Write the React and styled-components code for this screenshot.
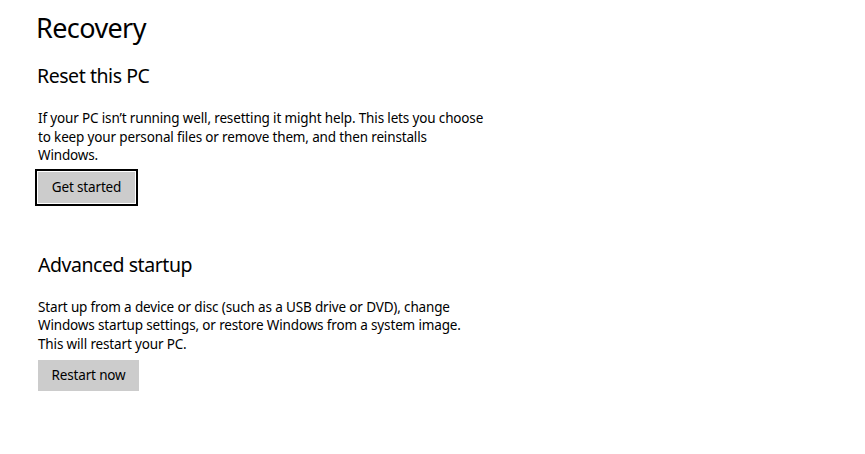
import React from "react";
import styled, { createGlobalStyle } from "styled-components";

const Global = createGlobalStyle`
  html, body { margin: 0; padding: 0; background: #fff; }
  body { font-family: "Noto Sans", "Open Sans", sans-serif; color: #000; }
`;

const Page = styled.main`
  width: 865px;
  height: 454px;
  box-sizing: border-box;
  padding: 10px 0 0 38px;
  display: flex;
  flex-direction: column;
  align-items: flex-start;
`;

const Title = styled.h1`
  margin: 0 0 0 -2px;
  font-size: 27px;
  line-height: 36px;
  font-weight: 400;
  letter-spacing: -0.6px;
`;

const Section = styled.section`
  display: flex;
  flex-direction: column;
  align-items: flex-start;
  margin-top: ${(p) => p.$top}px;
`;

const Heading = styled.h2`
  margin: 0 0 0 ${(p) => p.$shift || 0}px;
  font-size: 19.5px;
  line-height: 28px;
  font-weight: 400;
  letter-spacing: -0.45px;
`;

const Text = styled.p`
  margin: 19px 0 0;
  width: 450px;
  font-size: 13.5px;
  line-height: 18.5px;
  letter-spacing: -0.15px;
`;

const Button = styled.button`
  margin-top: 7px;
  height: 31px;
  min-width: ${(p) => p.$w}px;
  padding: 0 12px;
  border: none;
  background: #cccccc;
  color: #000;
  font-family: inherit;
  font-size: 13.5px;
  line-height: 31px;
  letter-spacing: -0.15px;
  box-shadow: ${(p) =>
    p.$focused ? "0 0 0 1px #fff, 0 0 0 3px #000" : "none"};
  cursor: pointer;
`;

export default function App() {
  return (
    <>
      <Global />
      <Page>
        <Title>Recovery</Title>
        <Section $top={16}>
          <Heading $shift={-1}>Reset this PC</Heading>
          <Text>
            If your PC isn’t running well, resetting it might help. This lets you
            choose to keep your personal files or remove them, and then reinstalls
            Windows.
          </Text>
          <Button $focused $w={97}>Get started</Button>
        </Section>
        <Section $top={48}>
          <Heading>Advanced startup</Heading>
          <Text>
            Start up from a device or disc (such as a USB drive or DVD), change
            Windows startup settings, or restore Windows from a system image.
            This will restart your PC.
          </Text>
          <Button $w={101}>Restart now</Button>
        </Section>
      </Page>
    </>
  );
}
